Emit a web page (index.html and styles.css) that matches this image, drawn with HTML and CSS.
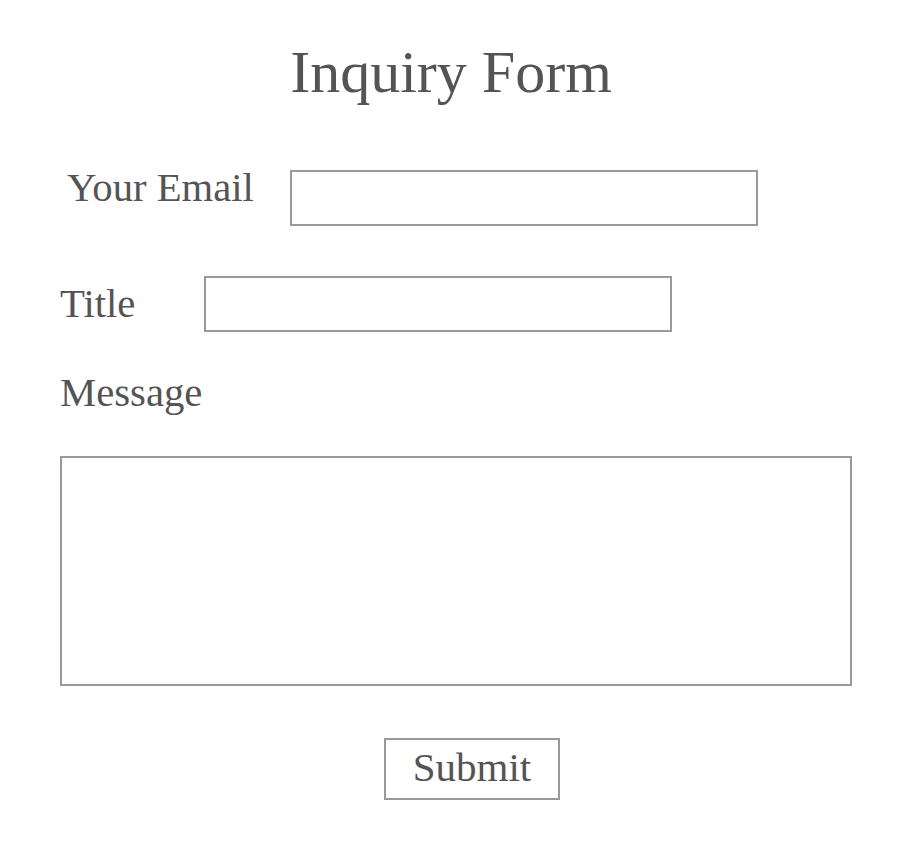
FILE: index.html
```html
<!DOCTYPE html>
<html lang="en">
<head>
<meta charset="utf-8">
<title>Inquiry Form</title>
<link rel="stylesheet" href="styles.css">
</head>
<body>
<main class="page">
  <h1 class="heading">Inquiry Form</h1>
  <form class="form">
    <div class="row row-email">
      <label class="label label-email" for="email">Your Email</label>
      <input class="field" id="email" type="email">
    </div>
    <div class="row row-title">
      <label class="label label-title" for="title">Title</label>
      <input class="field" id="title" type="text">
    </div>
    <label class="label label-message" for="message">Message</label>
    <textarea class="message" id="message"></textarea>
    <div class="actions">
      <button class="submit" type="submit">Submit</button>
    </div>
  </form>
</main>
</body>
</html>
```
FILE: styles.css
```css
* { box-sizing: border-box; }
html, body {
  margin: 0;
  background: #ffffff;
}
body {
  font-family: "Liberation Serif", "DejaVu Serif", serif;
  color: #545454;
}
.page {
  width: 792px;
  margin-left: 60px;
  padding-top: 37px;
}
.heading {
  margin: 0;
  font-size: 60px;
  line-height: 70px;
  font-weight: normal;
  text-align: center;
  padding-right: 10px;
}
.form {
  display: flex;
  flex-direction: column;
  margin-top: 63px;
}
.row {
  display: flex;
}
.row-email {
  align-items: flex-start;
}
.row-title {
  align-items: center;
  margin-top: 50px;
}
.label {
  font-size: 40.7px;
  line-height: 56px;
}
.label-email {
  width: 230px;
  padding-left: 7px;
  line-height: 36px;
}
.label-title {
  width: 144px;
}
.label-message {
  margin-top: 33px;
}
.field {
  width: 468px;
  height: 56px;
  border: 2px solid #999999;
  padding: 0 8px;
  margin: 0;
  background: #ffffff;
  outline: none;
  font: inherit;
  font-size: 20px;
}
.message {
  display: block;
  width: 792px;
  height: 230px;
  margin: 35px 0 0 0;
  border: 2px solid #999999;
  resize: none;
  outline: none;
  background: #ffffff;
  font: inherit;
  font-size: 20px;
  padding: 8px;
}
.actions {
  display: flex;
  margin-top: 52px;
  padding-left: 324px;
}
.submit {
  width: 176px;
  height: 62px;
  border: 2px solid #999999;
  background: #ffffff;
  color: #545454;
  font-family: "Liberation Serif", "DejaVu Serif", serif;
  font-size: 41px;
  line-height: 1;
  padding: 0 0 4px 0;
  margin: 0;
}
```
